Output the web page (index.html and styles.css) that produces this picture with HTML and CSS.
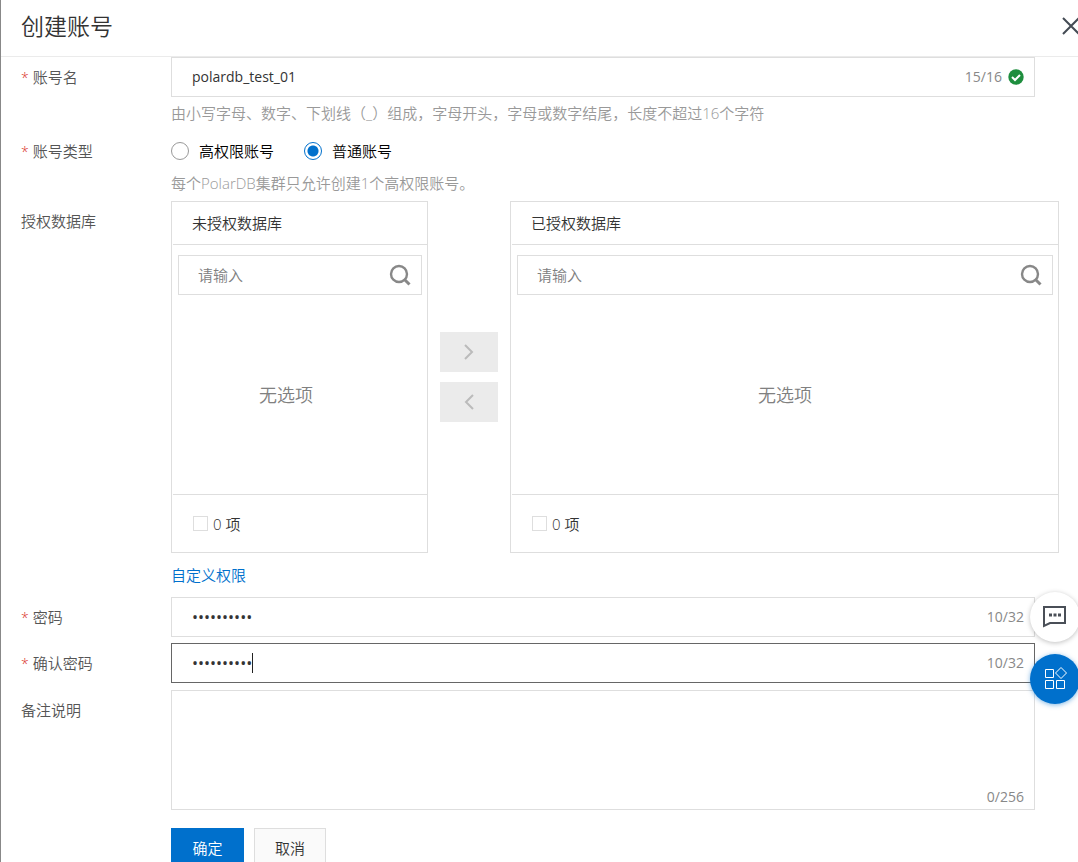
FILE: index.html
```
<!DOCTYPE html>
<html lang="zh-CN">
<head>
<meta charset="utf-8">
<meta name="viewport" content="width=device-width, initial-scale=1">
<title>创建账号</title>
<link rel="stylesheet" href="styles.css">
</head>
<body>
<main class="drawer">
  <header class="drawer-header">
    <h1 class="drawer-title">创建账号</h1>
    <button class="close" type="button" aria-label="关闭">
      <svg width="18" height="18" viewBox="0 0 18 18" fill="none" stroke="#444b54" stroke-width="2"><path d="M1 1l16 16M17 1L1 17"/></svg>
    </button>
  </header>

  <form class="form">
    <div class="row">
      <label class="label required" for="name">账号名</label>
      <div class="field">
        <div class="box">
          <input class="input" id="name" type="text" value="polardb_test_01">
          <span class="count">15/16</span>
          <svg class="ok" width="16" height="16" viewBox="0 0 16 16"><circle cx="8" cy="8" r="7.700" fill="#1e8e3e"/><path d="M4 8l3 3 5-5" fill="none" stroke="#fff" stroke-width="2"/></svg>
        </div>
        <p class="help help-spaced">由小写字母、数字、下划线（_）组成，字母开头，字母或数字结尾，长度不超过16个字符</p>
      </div>
    </div>

    <div class="row">
      <span class="label required" id="type-label">账号类型</span>
      <div class="field">
        <div class="radios" role="radiogroup" aria-labelledby="type-label">
          <label class="radio-label"><input class="radio" type="radio" name="type">高权限账号</label>
          <label class="radio-label"><input class="radio" type="radio" name="type" checked>普通账号</label>
        </div>
        <p class="help">每个PolarDB集群只允许创建1个高权限账号。</p>
      </div>
    </div>

    <div class="row">
      <span class="label">授权数据库</span>
      <div class="field">
        <div class="transfer">
          <section class="panel panel-source">
            <h2 class="panel-title">未授权数据库</h2>
            <div class="search">
              <input class="search-input" type="text" placeholder="请输入" aria-label="搜索未授权数据库">
              <svg width="22" height="22" viewBox="0 0 22 22" fill="none" stroke="#888"><circle cx="10" cy="10" r="8" stroke-width="2.400"/><path d="M15.500 15.500l5 5" stroke-width="3"/></svg>
            </div>
            <div class="empty">无选项</div>
            <label class="panel-footer"><input class="check" type="checkbox">0 项</label>
          </section>
          <div class="moves">
            <button class="move" type="button" aria-label="添加授权" disabled>
              <svg width="12" height="16" viewBox="0 0 12 16" fill="none" stroke="#bbb" stroke-width="2"><path d="M2 1l7 7-7 7"/></svg>
            </button>
            <button class="move" type="button" aria-label="移除授权" disabled>
              <svg width="12" height="16" viewBox="0 0 12 16" fill="none" stroke="#bbb" stroke-width="2"><path d="M10 1L3 8l7 7"/></svg>
            </button>
          </div>
          <section class="panel panel-target">
            <h2 class="panel-title">已授权数据库</h2>
            <div class="search">
              <input class="search-input" type="text" placeholder="请输入" aria-label="搜索已授权数据库">
              <svg width="22" height="22" viewBox="0 0 22 22" fill="none" stroke="#888"><circle cx="10" cy="10" r="8" stroke-width="2.400"/><path d="M15.500 15.500l5 5" stroke-width="3"/></svg>
            </div>
            <div class="empty">无选项</div>
            <label class="panel-footer"><input class="check" type="checkbox">0 项</label>
          </section>
        </div>
        <a class="custom" href="#">自定义权限</a>
      </div>
    </div>

    <div class="row row-entry">
      <label class="label required" for="pwd">密码</label>
      <div class="field">
        <div class="box">
          <input class="input input-secret" id="pwd" type="password" value="abcdefghij">
          <span class="count">10/32</span>
        </div>
      </div>
    </div>

    <div class="row row-entry">
      <label class="label required" for="pwd2">确认密码</label>
      <div class="field">
        <div class="box box-active">
          <input class="input input-secret" id="pwd2" type="password" value="abcdefghij">
          <span class="caret"></span>
          <span class="count">10/32</span>
        </div>
      </div>
    </div>

    <div class="row row-memo">
      <label class="label" for="memo">备注说明</label>
      <div class="field">
        <div class="box box-area">
          <textarea class="area" id="memo"></textarea>
          <span class="count">0/256</span>
        </div>
      </div>
    </div>

    <div class="actions">
      <button class="btn btn-primary" type="button">确定</button>
      <button class="btn" type="button">取消</button>
    </div>
  </form>
</main>

<aside class="floats">
  <button class="float" type="button" aria-label="咨询">
    <svg width="24" height="24" viewBox="0 0 24 24" fill="none" stroke="#4a4f57" stroke-width="2"><path d="M1 2h21v16H7l-6 3z"/><path d="M6 10h3M10.500 10h3M15 10h3" stroke-width="3"/></svg>
  </button>
  <button class="float float-blue" type="button" aria-label="应用">
    <svg width="24" height="24" viewBox="0 0 24 24" fill="none" stroke="#fff" stroke-width="1"><path d="M2.500 2.500h8v8h-8zM2.500 13.500h8v8h-8zM13.500 13.500h8v8h-8zM18 .5l5.500 5.500-5.500 5.500L12.500 6z"/></svg>
  </button>
</aside>
</body>
</html>
```
FILE: styles.css
```
* { box-sizing: border-box; }

body {
  margin: 0;
  color: #333;
  background: #fff;
  font: 15px/20px "Open Sans", "Noto Sans CJK SC", sans-serif;
  font-weight: 350;
  overflow: hidden;
  height: 100vh;
}

button, input, textarea { font: inherit; color: inherit; }
h1, h2, p { margin: 0; font-weight: inherit; }

.drawer { min-height: 100vh; border-left: 1px solid #888; }

.drawer-header {
  display: flex;
  align-items: center;
  justify-content: space-between;
  height: 57px;
  padding: 0 0 4px 20px;
  border-bottom: 1px solid #ebebeb;
}
.drawer-title { font-size: 23px; line-height: 32px; }

.close {
  display: flex;
  margin-right: -2px;
  padding: 0;
  border: 0;
  background: none;
}

.form { padding: 0 19px 0 20px; }

.row {
  display: grid;
  grid-template-columns: 150px minmax(0, 1fr);
  margin-bottom: 4px;
}
.row-entry { margin-bottom: 6px; }
.row-memo { margin: 7px 0 18px; }

.label { line-height: 40px; color: #555; }
.required::before {
  content: "*";
  margin-right: 4px;
  color: #d93026;
  font-size: 14px;
  line-height: 20px;
}

.box {
  position: relative;
  display: flex;
  align-items: center;
  height: 40px;
  margin-right: 24px;
  padding: 0 10px 0 20px;
  border: 1px solid #dedede;
}
.box-active { border-color: #666; }
.input {
  flex: 1;
  min-width: 0;
  padding: 0;
  border: 0;
  outline: 0;
  background: none;
  font-size: 14px;
  font-weight: 400;
}
.input-secret { font-size: 16px; }
.caret {
  position: absolute;
  left: 80px;
  top: 9px;
  width: 1px;
  height: 20px;
  background: #222;
}
.count { color: #888; font-size: 14px; font-weight: 400; }
.ok { margin-left: 6px; }

.help { padding-bottom: 2px; line-height: 24px; color: #999; }
.help-spaced { margin-top: 4px; }

.radios { display: flex; gap: 30px; height: 40px; color: #000; }
.radio-label { display: flex; align-items: center; gap: 10px; }
.radio {
  appearance: none;
  width: 18px;
  height: 18px;
  margin: 0;
  border: 1px solid #999;
  border-radius: 50%;
}
.radio:checked {
  border-color: #0070cc;
  background: radial-gradient(circle, #0070cc 5px, #fff 6px);
}

.transfer { display: flex; gap: 12px; }
.panel {
  display: flex;
  flex-direction: column;
  height: 352px;
  padding: 0 0 0 1px;
  border: 1px solid #dedede;
}
.panel-source { width: 257px; }
.panel-target { flex: 1; min-width: 0; }
.panel-title {
  padding: 0 19px;
  border-bottom: 1px solid #dedede;
  font-size: 15px;
  line-height: 42px;
}
.search {
  display: flex;
  align-items: center;
  height: 40px;
  margin: 10px 5px 0;
  padding: 0 10px 0 19px;
  border: 1px solid #dedede;
}
.search-input {
  flex: 1;
  min-width: 0;
  padding: 0;
  border: 0;
  outline: 0;
  background: none;
}
.search-input::placeholder { color: #808080; opacity: 1; }
.empty {
  flex: 1;
  display: flex;
  align-items: center;
  justify-content: center;
  color: #808080;
  font-size: 18px;
}
.panel-source .empty { padding-right: 28px; }
.panel-footer {
  display: flex;
  align-items: center;
  gap: 5px;
  height: 58px;
  padding: 0 20px;
  border-top: 1px solid #dedede;
}
.check {
  appearance: none;
  width: 15px;
  height: 15px;
  margin: 0;
  border: 1px solid #dedede;
}

.moves {
  display: flex;
  flex-direction: column;
  justify-content: center;
  gap: 10px;
}
.move {
  display: flex;
  align-items: center;
  justify-content: center;
  width: 58px;
  height: 40px;
  padding: 0;
  border: 0;
  background: #ebebeb;
}

.custom {
  display: inline-block;
  padding: 12px 0 8px;
  color: #0070cc;
  text-decoration: none;
}

.box-area { height: 120px; align-items: flex-end; padding-bottom: 2px; }
.area {
  flex: 1;
  height: 110px;
  padding: 0;
  border: 0;
  outline: 0;
  resize: none;
  background: none;
}

.actions { display: flex; gap: 10px; padding-left: 150px; }
.btn {
  width: 72px;
  height: 40px;
  padding: 0;
  border: 1px solid #dedede;
  background: #fafafa;
}
.btn-primary {
  width: 73px;
  border-color: #0070cc;
  color: #fff;
  background: #0070cc;
}

.floats {
  position: fixed;
  right: -2px;
  bottom: 158px;
  display: flex;
  flex-direction: column;
  gap: 12px;
}
.float {
  display: flex;
  align-items: center;
  justify-content: center;
  width: 50px;
  height: 50px;
  padding: 0;
  border: 0;
  border-radius: 50%;
  background: #fff;
  box-shadow: 0 1px 5px rgba(0, 0, 0, 0.25);
}
.float-blue {
  background: #0070cc;
  box-shadow: 0 1px 5px rgba(0, 112, 204, 0.5);
}
```
